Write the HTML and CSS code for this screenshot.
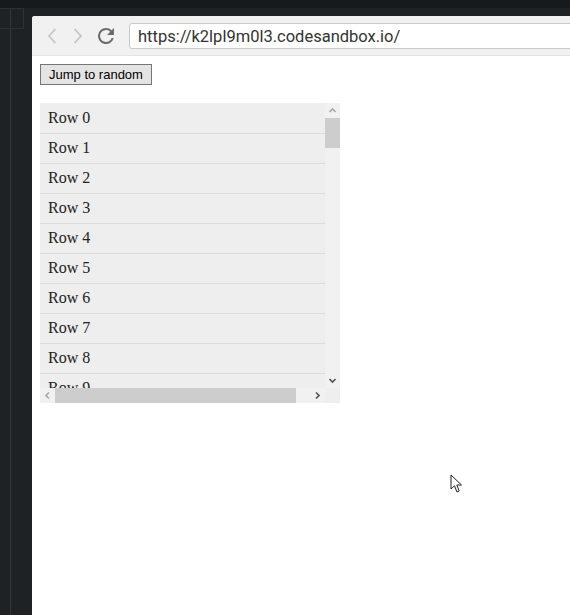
FILE: index.html
```html
<!DOCTYPE html>
<html lang="en">
<head>
    <meta charset="UTF-8">
    <meta name="viewport" content="width=device-width, initial-scale=1.0">
    <title>Virtual list - jump to random</title>
    <link rel="stylesheet" href="styles.css">
</head>
<body>
    <div class="topbar"></div>

    <div class="workspace">
        <aside class="sidebar">
            <div class="tab-box"></div>
        </aside>

        <main class="window">
            <!-- Browser chrome -->
            <div class="toolbar">
                <svg class="nav-icon" width="12" height="18" viewBox="0 0 12 18">
                    <path d="M9.5 2 L3 9 L9.5 16" fill="none" stroke="#c2c2c2" stroke-width="1.6"/>
                </svg>
                <svg class="nav-icon" width="12" height="18" viewBox="0 0 12 18">
                    <path d="M2.5 2 L9 9 L2.5 16" fill="none" stroke="#c2c2c2" stroke-width="1.6"/>
                </svg>
                <svg class="nav-icon reload" width="24" height="24" viewBox="0 0 24 24">
                    <path fill="#6b6b6b" d="M17.65 6.35A7.96 7.96 0 0 0 12 4a8 8 0 1 0 7.73 10h-2.08A6 6 0 1 1 12 6c1.66 0 3.14.69 4.22 1.78L13 11h7V4l-2.35 2.35z"/>
                </svg>
                <div class="url">https://k2lpl9m0l3.codesandbox.io/</div>
            </div>

            <!-- Page -->
            <div class="page">
                <div><button class="jump">Jump to random</button></div>

                <div class="list">
                    <div class="viewport" id="viewport"></div>

                    <div class="vscroll">
                        <svg class="arrow" width="15" height="15" viewBox="0 0 15 15">
                            <path d="M4.5 9 L7.5 6 L10.5 9" fill="none" stroke="#a8a8a8" stroke-width="1.6"/>
                        </svg>
                        <div class="vthumb"></div>
                        <div class="spacer"></div>
                        <svg class="arrow" width="15" height="15" viewBox="0 0 15 15">
                            <path d="M4.5 6 L7.5 9 L10.5 6" fill="none" stroke="#505050" stroke-width="1.6"/>
                        </svg>
                    </div>

                    <div class="hscroll">
                        <svg class="arrow" width="15" height="15" viewBox="0 0 15 15">
                            <path d="M9 4.5 L6 7.5 L9 10.5" fill="none" stroke="#a8a8a8" stroke-width="1.6"/>
                        </svg>
                        <div class="hthumb"></div>
                        <div class="spacer"></div>
                        <svg class="arrow" width="15" height="15" viewBox="0 0 15 15">
                            <path d="M6 4.5 L9 7.5 L6 10.5" fill="none" stroke="#505050" stroke-width="1.6"/>
                        </svg>
                    </div>

                    <div class="corner"></div>
                </div>
            </div>

            <svg class="cursor" width="13" height="20" viewBox="0 0 13 20">
                <path d="M1 1 L1 15 L4.5 11.8 L7 18 L9.2 17 L6.8 11 L11.5 11 Z"
                      fill="#fff" stroke="#222" stroke-width="1" stroke-linejoin="round"/>
            </svg>
        </main>
    </div>

    <script>
        // Only the first rows are ever visible, render a handful
        const viewport = document.getElementById('viewport');
        for (let i = 0; i < 11; i++) {
            const row = document.createElement('div');
            row.className = 'row';
            row.textContent = `Row ${i}`;
            viewport.appendChild(row);
        }
    </script>
</body>
</html>
```

FILE: styles.css
```css
html, body {
    margin: 0;
    height: 100%;
}
body {
    background-color: #1e2225;
    overflow: hidden;
    display: flex;
    flex-direction: column;
}
.topbar {
    height: 8px;
    background-color: #17191b;
    flex: none;
}
.workspace {
    flex: 1;
    display: flex;
}
.sidebar {
    width: 32px;
    flex: none;
    background: linear-gradient(to right, transparent 10px, #32373b 10px, #32373b 11px, transparent 11px);
}
.tab-box {
    width: 23px;
    height: 19px;
    border: 1px solid #2c3135;
    border-left: none;
}
.window {
    flex: 1;
    margin-top: 8px;
    background: white;
    border-top-left-radius: 3px;
    overflow: hidden;
    position: relative;
}
.toolbar {
    height: 40px;
    box-sizing: border-box;
    background-color: #f1f1f1;
    border-bottom: 1px solid #e4e4e4;
    display: flex;
    align-items: center;
    padding-left: 14px;
}
.nav-icon {
    flex: none;
    margin-right: 14px;
}
.nav-icon.reload {
    margin-left: -4px;
    margin-right: 11px;
    margin-top: 1px;
}
.url {
    flex: none;
    width: 470px;
    height: 26px;
    box-sizing: border-box;
    background: white;
    border: 1px solid #c9c9c9;
    border-radius: 3px;
    padding: 2px 8px 0;
    font-family: Roboto, "Liberation Sans", sans-serif;
    font-size: 16.5px;
    line-height: 21px;
    color: #333;
}
.page {
    padding: 8px;
}
.jump {
    font-family: "Liberation Sans", Arial, sans-serif;
    font-size: 13px;
    height: 21px;
    padding: 0 8px;
    margin: 0;
    color: #000;
    background: #e4e4e4;
    border: 1px solid #767676;
    border-radius: 0;
}
.list {
    margin-top: 18px;
    width: 300px;
    display: grid;
    grid-template-columns: 285px 15px;
    grid-template-rows: 285px 15px;
    background-color: #eee;
}
.viewport {
    overflow: hidden;
    padding-top: 1px;
}
.row {
    width: 320px;
    height: 30px;
    box-sizing: border-box;
    border-bottom: 1px solid #dcdcdc;
    padding: 0 0 2px 8px;
    font-family: "Liberation Serif", "Times New Roman", serif;
    font-size: 16px;
    line-height: 27px;
    color: #222;
}
.vscroll {
    display: flex;
    flex-direction: column;
    background-color: #f1f1f1;
}
.hscroll {
    display: flex;
    background-color: #f1f1f1;
}
.arrow {
    flex: none;
    display: block;
}
.spacer {
    flex: 1;
}
.vthumb {
    height: 30px;
    background-color: #cdcdcd;
}
.hthumb {
    width: 241px;
    background-color: #cdcdcd;
}
.corner {
    background-color: #eee;
}
.cursor {
    position: absolute;
    left: 418px;
    top: 458px;
}
```
